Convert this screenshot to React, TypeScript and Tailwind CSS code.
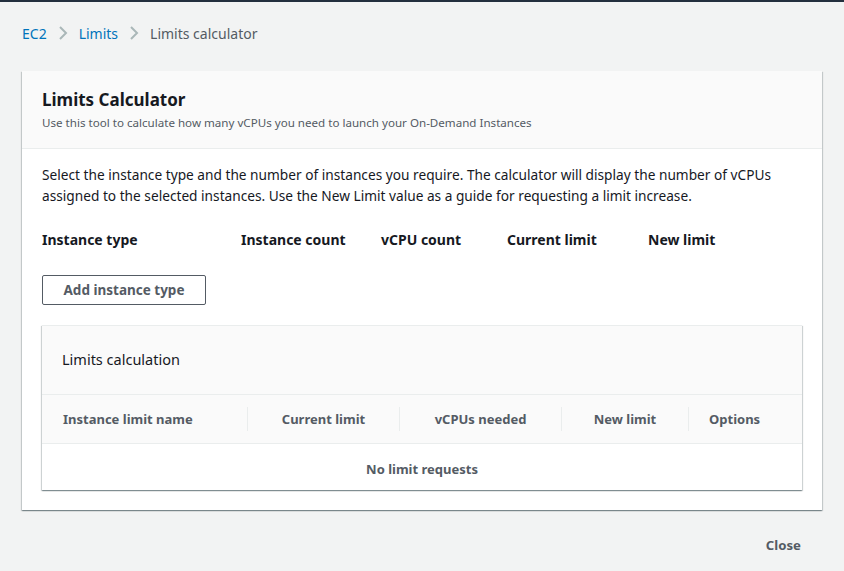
const font = { fontFamily: '"Noto Sans", "Open Sans", sans-serif' };

function Chevron() {
  return (
    <svg width="10" height="14" viewBox="0 0 10 14" className="mx-[11px]" aria-hidden>
      <path d="M2 1l6 6-6 6" fill="none" stroke="#aab7b8" strokeWidth="2" />
    </svg>
  );
}

const cols = [
  { label: "Instance limit name", w: "w-[206px]", align: "text-left pl-[21px]" },
  { label: "Current limit", w: "w-[152px]", align: "text-center" },
  { label: "vCPUs needed", w: "w-[162px]", align: "text-center" },
  { label: "New limit", w: "w-[127px]", align: "text-center" },
  { label: "Options", w: "flex-1", align: "text-left pl-[20px]" },
];

export default function App() {
  return (
    <div className="w-[844px] h-[571px] bg-[#f2f3f3] border-t-2 border-[#232f3e] text-[#16191f]" style={font}>
      <nav className="flex items-center h-[60px] pl-[22px] pt-[2px] text-[14px]">
        <a className="text-[#0073bb]">EC2</a>
        <Chevron />
        <a className="text-[#0073bb]">Limits</a>
        <Chevron />
        <span className="text-[#545b64]">Limits calculator</span>
      </nav>

      <div className="mx-[22px] mt-[9px] bg-white shadow-[0_1px_1px_0_rgba(0,28,36,0.3),1px_1px_1px_0_rgba(0,28,36,0.15),-1px_1px_1px_0_rgba(0,28,36,0.15)]">
        <div className="bg-[#fafafa] border-b border-[#eaeded] px-[20px] pt-[18px] pb-[17px]">
          <h2 className="text-[17px] font-bold leading-[22px]">Limits Calculator</h2>
          <p className="text-[11.6px] text-[#545b64] mt-[4px] leading-[16px]">
            Use this tool to calculate how many vCPUs you need to launch your On-Demand Instances
          </p>
        </div>

        <div className="px-[20px] pt-[15px] pb-[20px]">
          <p className="text-[13.7px] leading-[21px]">
            Select the instance type and the number of instances you require. The calculator will display the number of vCPUs assigned to the selected instances. Use the New Limit value as a guide for requesting a limit increase.
          </p>

          <div className="flex mt-[24px] text-[14px] font-bold leading-[20px]">
            <div className="w-[199px]">Instance type</div>
            <div className="w-[140px]">Instance count</div>
            <div className="w-[126px]">vCPU count</div>
            <div className="w-[141px]">Current limit</div>
            <div>New limit</div>
          </div>

          <button className="mt-[25px] h-[30px] w-[164px] border border-[#545b64] rounded-[2px] text-[13.5px] font-bold text-[#545b64]">
            Add instance type
          </button>

          <div className="mt-[20px] shadow-[0_1px_1px_0_rgba(0,28,36,0.3),1px_1px_1px_0_rgba(0,28,36,0.15),-1px_1px_1px_0_rgba(0,28,36,0.15)] border-t border-[#eaeded]">
            <div className="bg-[#fafafa] h-[69px] flex items-center px-[20px] border-b border-[#eaeded] text-[14.5px]">
              Limits calculation
            </div>
            <div className="bg-[#fafafa] h-[49px] flex items-center border-b border-[#eaeded] text-[13px] font-bold text-[#545b64]">
              {cols.map((c, i) => (
                <div
                  key={c.label}
                  className={`${c.w} ${c.align} ${i < cols.length - 1 ? "border-r border-[#eaeded]" : ""} h-[24px] leading-[24px]`}
                >
                  {c.label}
                </div>
              ))}
            </div>
            <div className="bg-white h-[46px] flex items-center justify-center pt-[5px] text-[13px] font-bold text-[#545b64]">
              No limit requests
            </div>
          </div>
        </div>
      </div>

      <div className="flex justify-end pr-[43px] mt-[24px]">
        <button className="text-[13.2px] font-bold text-[#545b64] h-[24px]">Close</button>
      </div>
    </div>
  );
}
